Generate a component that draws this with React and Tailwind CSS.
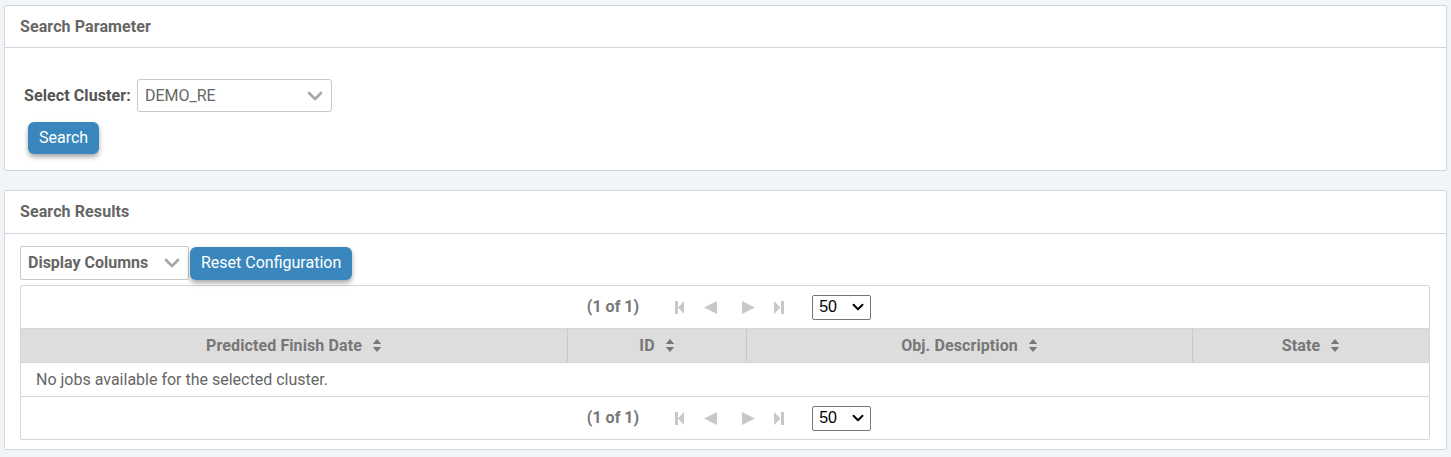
import React from 'react';

const font = { fontFamily: 'Roboto, "Liberation Sans", sans-serif' };

const Chevron = ({ className }) => (
  <svg viewBox="0 0 16 10" className={className}>
    <path d="M2 2 L8 8 L14 2" fill="none" stroke="currentColor" strokeWidth="2.6" strokeLinecap="round" strokeLinejoin="round" />
  </svg>
);

const SortIcon = () => (
  <svg viewBox="0 0 10 16" className="ml-[10px] h-[15px] w-[10px] text-[#777]">
    <path d="M5 1 L9.5 6.5 H0.5 Z M5 15 L9.5 9.5 H0.5 Z" fill="currentColor" />
  </svg>
);

const PageIcons = () => (
  <div className="flex items-center text-[#c8c8c8]">
    <svg viewBox="0 0 9 13" className="h-[13px] w-[9px]">
      <path d="M0 0 H3 V13 H0 Z M9 0 V13 L3 6.5 Z" fill="currentColor" />
    </svg>
    <svg viewBox="0 0 13 13" className="ml-[20px] h-[13px] w-[13px]">
      <path d="M13 0 V13 L0 6.5 Z" fill="currentColor" />
    </svg>
    <svg viewBox="0 0 13 13" className="ml-[25px] h-[13px] w-[13px]">
      <path d="M0 0 V13 L13 6.5 Z" fill="currentColor" />
    </svg>
    <svg viewBox="0 0 10 13" className="ml-[19px] h-[13px] w-[10px]">
      <path d="M0 0 V13 L6.5 6.5 Z M7 0 H10 V13 H7 Z" fill="currentColor" />
    </svg>
  </div>
);

const Paginator = () => (
  <div className="flex h-[42px] items-center justify-center pl-[8px]">
    <span className="text-[16px] font-bold text-[#777]">(1 of 1)</span>
    <div className="ml-[36px]">
      <PageIcons />
    </div>
    <div className="ml-[28px] flex h-[25px] w-[59px] items-center justify-between rounded-[2px] border border-[#767676] bg-white pl-[6px] pr-[6px] text-[16px] text-black" style={{ fontFamily: '"Liberation Sans", Arial, sans-serif' }}>
      <span>50</span>
      <Chevron className="h-[8px] w-[12px] text-black" />
    </div>
  </div>
);

const Panel = ({ title, children, className = '', headH = 'h-[42px]' }) => (
  <div className={`rounded-[2px] border border-[#d2d6de] bg-white ${className}`}>
    <div className={`flex ${headH} items-center border-b border-[#d2d6de] px-[15px] text-[16px] font-bold tracking-[0.1px] text-[#666]`}>
      {title}
    </div>
    {children}
  </div>
);

const columns = [
  { name: 'Predicted Finish Date', w: 'w-[546px]' },
  { name: 'ID', w: 'w-[179px]' },
  { name: 'Obj. Description', w: 'w-[446px]' },
  { name: 'State', w: 'flex-1' },
];

export default function App() {
  return (
    <div className="min-h-[457px] bg-[#f1f5f8] px-[4px] pt-[5px] pb-[7px]" style={font}>
      <Panel title="Search Parameter" className="h-[166px] w-[1443px]">
        <div className="px-[19px] pt-[31px]">
          <div className="flex items-center">
            <span className="text-[16px] font-bold tracking-[0.1px] text-[#555]">Select Cluster:</span>
            <div className="ml-[6px] flex h-[33px] w-[195px] items-center justify-between rounded-[3px] border border-[#c8c8c8] px-[7px] text-[16px] text-[#666]">
              <span>DEMO_RE</span>
              <Chevron className="mr-[1px] h-[10px] w-[16px] text-[#a8a8a8]" />
            </div>
          </div>
          <button className="mt-[10px] ml-[4px] h-[32px] rounded-[6px] bg-[#3a87bd] px-[11px] text-[16px] text-white shadow-[0_3px_5px_rgba(0,0,0,0.35)]">
            Search
          </button>
        </div>
      </Panel>

      <Panel title="Search Results" headH="h-[43px]" className="mt-[19px] h-[260px] w-[1443px]">
        <div className="px-[15px] pt-[12px]">
          <div className="flex items-center">
            <div className="flex h-[34px] w-[169px] items-center justify-between rounded-[2px] border border-[#c8c8c8] pl-[7px] pr-[8px] text-[16px] font-bold text-[#666]">
              <span>Display Columns</span>
              <Chevron className="h-[10px] w-[16px] text-[#a8a8a8]" />
            </div>
            <button className="ml-[1px] h-[33px] rounded-[6px] bg-[#3a87bd] px-[11px] text-[16px] text-white shadow-[0_3px_5px_rgba(0,0,0,0.35)]">
              Reset Configuration
            </button>
          </div>
          <div className="mt-[5px] w-[1410px] rounded-[2px] border border-[#d2d6de]">
            <Paginator />
            <div className="flex h-[35px] border-y border-[#d2d6de] bg-[#dddddd]">
              {columns.map((c, i) => (
                <div
                  key={c.name}
                  className={`flex items-center justify-center text-[16px] font-bold tracking-[0.1px] text-[#777] ${c.w} ${i > 0 ? 'border-l border-[#c8c8c8]' : ''}`}
                >
                  {c.name}
                  <SortIcon />
                </div>
              ))}
            </div>
            <div className="flex h-[34px] items-center border-b border-[#d2d6de] px-[15px] text-[16px] text-[#666]">
              No jobs available for the selected cluster.
            </div>
            <Paginator />
          </div>
        </div>
      </Panel>
    </div>
  );
}
